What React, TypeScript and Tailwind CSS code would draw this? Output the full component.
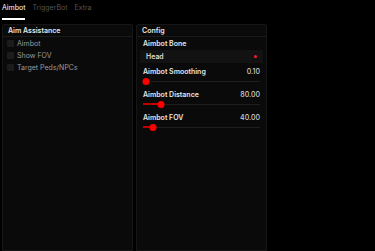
import React from "react";

const font = { fontFamily: "Inter, 'Liberation Sans', sans-serif" };

function Check({ label }: { label: string }) {
  return (
    <div className="flex items-center gap-[3px] h-[12px] px-[4px]">
      <div className="w-[7px] h-[7px] rounded-[1px] bg-[#1c1c1c]" />
      <span className="text-[7px] text-[#9a9a9a] leading-none">{label}</span>
    </div>
  );
}

function Slider({ label, value, pct }: { label: string; value: string; pct: number }) {
  return (
    <div className="px-[6px] pt-[3px]">
      <div className="flex justify-between items-center h-[10px]">
        <span className="text-[7px] font-semibold text-[#e6e6e6] leading-none">{label}</span>
        <span className="text-[7px] font-medium text-[#d0d0d0] leading-none">{value}</span>
      </div>
      <div className="relative h-[10px] flex items-center">
        <div className="w-full h-px bg-[#1e1e1e]" />
        <div className="absolute left-0 h-[2px] bg-[#c00000]" style={{ width: `${pct}%` }} />
        <div
          className="absolute w-[7px] h-[7px] rounded-full bg-[#ff0000] -translate-x-1/2"
          style={{ left: `calc(${pct}% + 3px)` }}
        />
      </div>
    </div>
  );
}

export default function App() {
  return (
    <div className="w-[375px] h-[251px] bg-black overflow-hidden flex flex-col" style={font}>
      <div className="flex items-end gap-[7px] h-[20px] px-[2px]">
        <div className="flex flex-col items-center">
          <span className="text-[7px] text-white leading-none mb-[7px]">Aimbot</span>
          <div className="h-[2px] w-[23px] bg-white" />
        </div>
        <span className="text-[7px] text-[#555] leading-none mb-[9px]">TriggerBot</span>
        <span className="text-[7px] text-[#555] leading-none mb-[9px]">Extra</span>
      </div>
      <div className="flex gap-[3px] px-[2px] pt-[4px] flex-1">
        <div className="w-[131px] bg-[#0a0a0a] border border-[#161616] rounded-t-[2px]">
          <div className="h-[12px] flex items-center px-[5px] border-b border-[#1a1a1a]">
            <span className="text-[7px] font-semibold text-[#e6e6e6] leading-none">Aim Assistance</span>
          </div>
          <div className="pt-0">
            <Check label="Aimbot" />
            <Check label="Show FOV" />
            <Check label="Target Peds/NPCs" />
          </div>
        </div>
        <div className="w-[131px] bg-[#0a0a0a] border border-[#161616] rounded-t-[2px]">
          <div className="h-[12px] flex items-center px-[5px] border-b border-[#1a1a1a]">
            <span className="text-[7px] font-semibold text-[#e6e6e6] leading-none">Config</span>
          </div>
          <div className="px-[6px] h-[12px] flex items-center">
            <span className="text-[7px] font-semibold text-[#e6e6e6] leading-none">Aimbot Bone</span>
          </div>
          <div className="mx-[3px] h-[13px] bg-[#121212] flex items-center justify-between px-[6px] mt-[1px]">
            <span className="text-[7px] font-medium text-[#e6e6e6] leading-none">Head</span>
            <div className="w-[3px] h-[3px] rounded-full bg-[#ff1a1a]" />
          </div>
          <Slider label="Aimbot Smoothing" value="0.10" pct={0} />
          <Slider label="Aimbot Distance" value="80.00" pct={13} />
          <Slider label="Aimbot FOV" value="40.00" pct={6} />
        </div>
      </div>
    </div>
  );
}
